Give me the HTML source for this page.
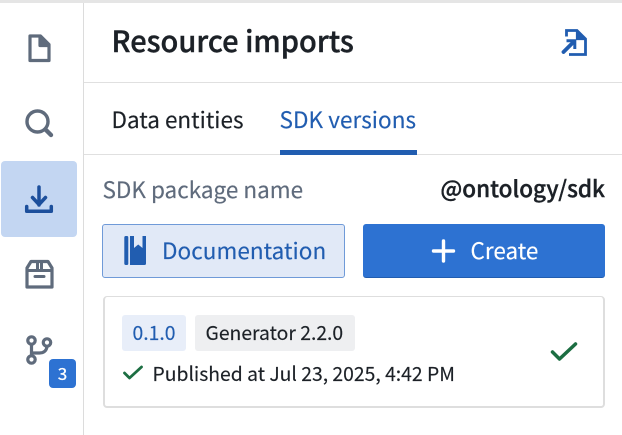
<!DOCTYPE html>
<html><head><meta charset="utf-8">
<style>
html,body{margin:0;padding:0;background:#fff}
body{width:622px;height:435px;position:relative;overflow:hidden;font-family:"Noto Sans CJK JP","Liberation Sans",sans-serif;color:#1c2127}
.t{position:absolute;white-space:nowrap;line-height:1;-webkit-text-stroke:.15px currentColor}
.s{font-weight:500;-webkit-text-stroke:.4px currentColor}
.b{position:absolute;box-sizing:border-box}
svg{position:absolute;overflow:visible}
</style></head>
<body>
<div class="b" style="left:0;top:0;width:622px;height:3px;background:#e5e5e5"></div>
<div class="b" style="left:83px;top:3px;width:1px;height:432px;background:#dcdcdc"></div>
<div class="b" style="left:84px;top:82px;width:538px;height:1px;background:#e0e0e0"></div>
<div class="b" style="left:84px;top:154px;width:538px;height:1px;background:#e0e0e0"></div>
<div class="b" style="left:1px;top:161px;width:76px;height:76px;background:#c3d6f2;border-radius:4px"></div>

<!-- sidebar icons -->
<svg style="left:0;top:0" width="84" height="435" viewBox="0 0 84 435">
<path d="M30 36H40.500L49 44.500V60.500H30Z M40 36V45.500H49" fill="none" stroke="#5f6b7c" stroke-width="3.200" stroke-linejoin="round"/>
<path d="M40.500 36L49 44.500H40.500Z" fill="#5f6b7c"/>
<circle cx="37.500" cy="121.500" r="10.500" fill="none" stroke="#5f6b7c" stroke-width="3.400"/>
<path d="M45.500 129.500L51 135" stroke="#5f6b7c" stroke-width="4.400" stroke-linecap="round"/>
<path d="M39 187V205M32.500 197.500L39 204.500L45.500 197.500" fill="none" stroke="#1c4f9c" stroke-width="3.500" stroke-linecap="round" stroke-linejoin="round"/>
<path d="M26.700 206.500V211.300H51.300V206.500" fill="none" stroke="#1c4f9c" stroke-width="3.500" stroke-linecap="round" stroke-linejoin="round"/>
<path d="M27 268L31 261.500H48L52 268V287H27Z" fill="none" stroke="#5f6b7c" stroke-width="3.200" stroke-linejoin="round"/>
<path d="M26 270.500H53M37.500 261V270M41.500 261V270" fill="none" stroke="#5f6b7c" stroke-width="3"/>
<path d="M35 276.500H44" stroke="#5f6b7c" stroke-width="3" stroke-linecap="round"/>
<circle cx="31.500" cy="340.500" r="3.700" fill="none" stroke="#5f6b7c" stroke-width="3.200"/>
<circle cx="31.500" cy="359.500" r="3.700" fill="none" stroke="#5f6b7c" stroke-width="3.200"/>
<circle cx="47" cy="342.500" r="3.700" fill="none" stroke="#5f6b7c" stroke-width="3.200"/>
<path d="M31.500 344.500V355.500M33 353H39.500C43.500 353 46.500 351 47 346.500" fill="none" stroke="#5f6b7c" stroke-width="3.200"/>
</svg>
<div class="b" style="left:49px;top:359px;width:27px;height:29px;background:#2d72d2;border-radius:4px"></div>
<div class="t" style="left:49px;top:364px;width:27px;text-align:center;font-size:17px;color:#fff;-webkit-text-stroke:.3px #fff">3</div>

<!-- header -->
<div class="t s" style="left:111.500px;top:26px;font-size:29px;color:#1c2127">Resource imports</div>
<svg style="left:558px;top:26px" width="32" height="32" viewBox="0 0 32 32">
<path d="M8.500 10.500V4.500H19L27.500 13V28.500H11" fill="none" stroke="#215db0" stroke-width="2.800"/>
<path d="M19 4.500V13H27.500" fill="none" stroke="#215db0" stroke-width="2.200"/>
<path d="M19 4.500L27.500 13H19Z" fill="#215db0"/>
<path d="M5.500 26L15 16.500" stroke="#215db0" stroke-width="3.800" stroke-linecap="round"/>
<path d="M8.500 14.800H16.800V23" fill="none" stroke="#215db0" stroke-width="3"/>
</svg>

<!-- tabs -->
<div class="t" style="left:111.500px;top:108px;font-size:22.500px;color:#1c2127">Data entities</div>
<div class="t" style="left:279.500px;top:108px;font-size:22.500px;letter-spacing:.07px;color:#215db0">SDK versions</div>
<div class="b" style="left:280px;top:150px;width:137px;height:5px;background:#215db0"></div>

<!-- package row -->
<div class="t" style="left:102.500px;top:178px;font-size:22.500px;color:#5f6b7c">SDK package name</div>
<div class="t s" style="right:17px;top:177px;font-size:22.500px;color:#1c2127">@ontology/sdk</div>

<!-- buttons -->
<div class="b" style="left:102px;top:224px;width:243px;height:54px;background:#e1e9f7;border:1px solid #6f9ad8;border-radius:3px"></div>
<svg style="left:124px;top:236px" width="24" height="30" viewBox="0 0 24 30">
<rect x="0.300" y="0" width="4" height="29" rx="1.500" fill="#215db0"/>
<path d="M6 0H10V12L14.200 8.500L18.500 12V0H22V27.500Q22 29 20.500 29H6Z" fill="#215db0"/>
</svg>
<div class="t" style="left:162px;top:238.500px;font-size:22.500px;letter-spacing:.05px;color:#215db0">Documentation</div>
<div class="b" style="left:363px;top:224px;width:242px;height:54px;background:#2d72d2;border-bottom:1px solid #215db0;border-radius:3px"></div>
<svg style="left:432px;top:240px" width="24" height="22" viewBox="0 0 24 22">
<path d="M1.500 11H21.500M11.500 1V21" stroke="#fff" stroke-width="3.400" stroke-linecap="round"/>
</svg>
<div class="t" style="left:470.500px;top:238.500px;font-size:22.500px;color:#fff">Create</div>

<!-- card -->
<div class="b" style="left:103px;top:296px;width:502px;height:112px;background:#fff;border:1px solid #dedede;border-bottom-width:2px;border-right-width:2px;border-left-width:2px;border-radius:4px"></div>
<div class="b" style="left:122px;top:315px;width:64px;height:36px;background:#e8eef9;border-radius:3px"></div>
<div class="t" style="left:132.500px;top:323px;font-size:19.350px;color:#215db0">0.1.0</div>
<div class="b" style="left:195px;top:315px;width:160px;height:36px;background:#eeeff1;border-radius:3px"></div>
<div class="t" style="left:205.500px;top:323px;font-size:19.350px;color:#1c2127">Generator 2.2.0</div>
<svg style="left:122px;top:365px" width="22" height="16" viewBox="0 0 22 16">
<path d="M2.500 8L7.500 13L19.500 2" fill="none" stroke="#1c6e42" stroke-width="2.800" stroke-linecap="round" stroke-linejoin="round"/>
</svg>
<div class="t" style="left:152.500px;top:364px;font-size:19.350px;color:#1c2127">Published at Jul 23, 2025, 4:42 PM</div>
<svg style="left:549px;top:341px" width="30" height="24" viewBox="0 0 30 24">
<path d="M3.500 11L10.500 18L26.500 3" fill="none" stroke="#1c6e42" stroke-width="3.500" stroke-linecap="round" stroke-linejoin="round"/>
</svg>
</body></html>
